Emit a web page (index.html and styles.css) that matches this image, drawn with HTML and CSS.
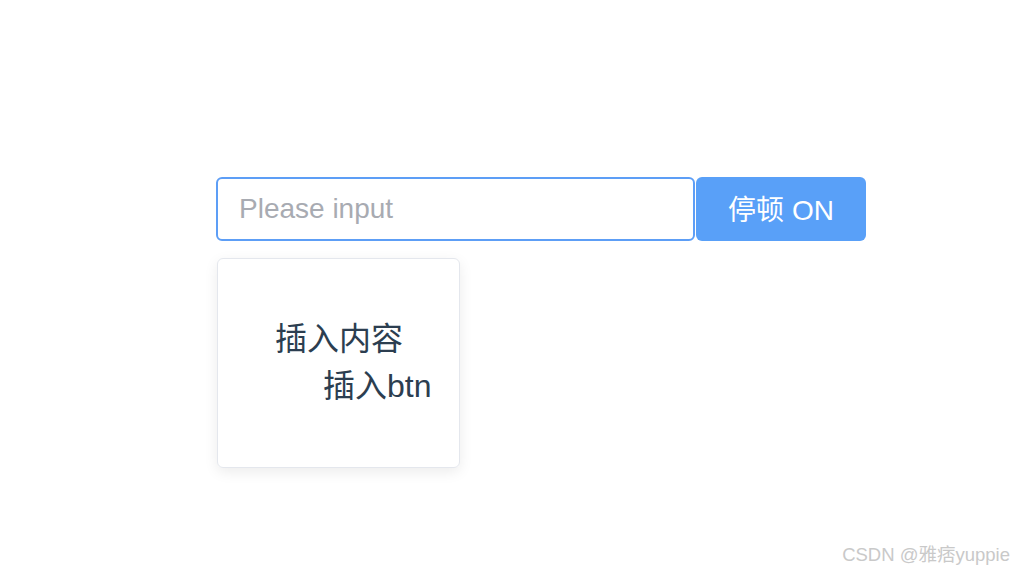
FILE: index.html
```html
<!DOCTYPE html>
<html lang="zh-CN">
<head>
  <meta charset="UTF-8">
  <meta name="viewport" content="width=device-width, initial-scale=1.0">
  <title>插入内容</title>
  <link rel="stylesheet" href="styles.css">
</head>
<body>
  <div class="app">
    <div class="search-row">
      <input class="text-input" type="text" placeholder="Please input">
      <button class="pause-btn">停顿 ON</button>
    </div>
    <div class="popover">
      <div class="line">插入内容</div>
      <div class="line second">插入btn</div>
    </div>
  </div>
  <div class="watermark">CSDN @雅痞yuppie</div>
</body>
</html>
```

FILE: styles.css
```css
body {
  margin: 0;
  font-family: "Liberation Sans", "Noto Sans CJK SC", sans-serif;
  color: #2c3e50;
  background: #fff;
  height: 572px;
  position: relative;
  overflow: hidden;
}

.app {
  padding: 177px 0 0 216px;
}

.search-row {
  display: flex;
  gap: 1px;
}

.text-input {
  box-sizing: border-box;
  width: 479px;
  height: 64px;
  padding: 0 21px;
  border: 2px solid #5d9ef6;
  border-radius: 6px;
  font-family: "Liberation Sans", sans-serif;
  font-size: 28px;
  color: #606266;
  outline: none;
}

.text-input::placeholder {
  color: #a8abb2;
}

.pause-btn {
  box-sizing: border-box;
  width: 170px;
  height: 64px;
  border: none;
  border-radius: 6px;
  background: #59a0f8;
  color: #fff;
  font-family: "Liberation Sans", "Noto Sans CJK SC", sans-serif;
  font-size: 28px;
  padding: 0 0 2px;
  cursor: pointer;
}

.popover {
  box-sizing: border-box;
  width: 243px;
  height: 210px;
  margin: 17px 0 0 1px;
  padding: 57px 0 0 57px;
  border: 1px solid #e4e7ed;
  border-radius: 6px;
  box-shadow: 0 4px 14px rgba(0, 0, 0, 0.08);
  font-size: 32px;
  line-height: 47px;
}

.line.second {
  padding-left: 48px;
}

.watermark {
  position: absolute;
  right: 4px;
  bottom: 6px;
  font-size: 18.5px;
  color: #c9c9c9;
}
```
